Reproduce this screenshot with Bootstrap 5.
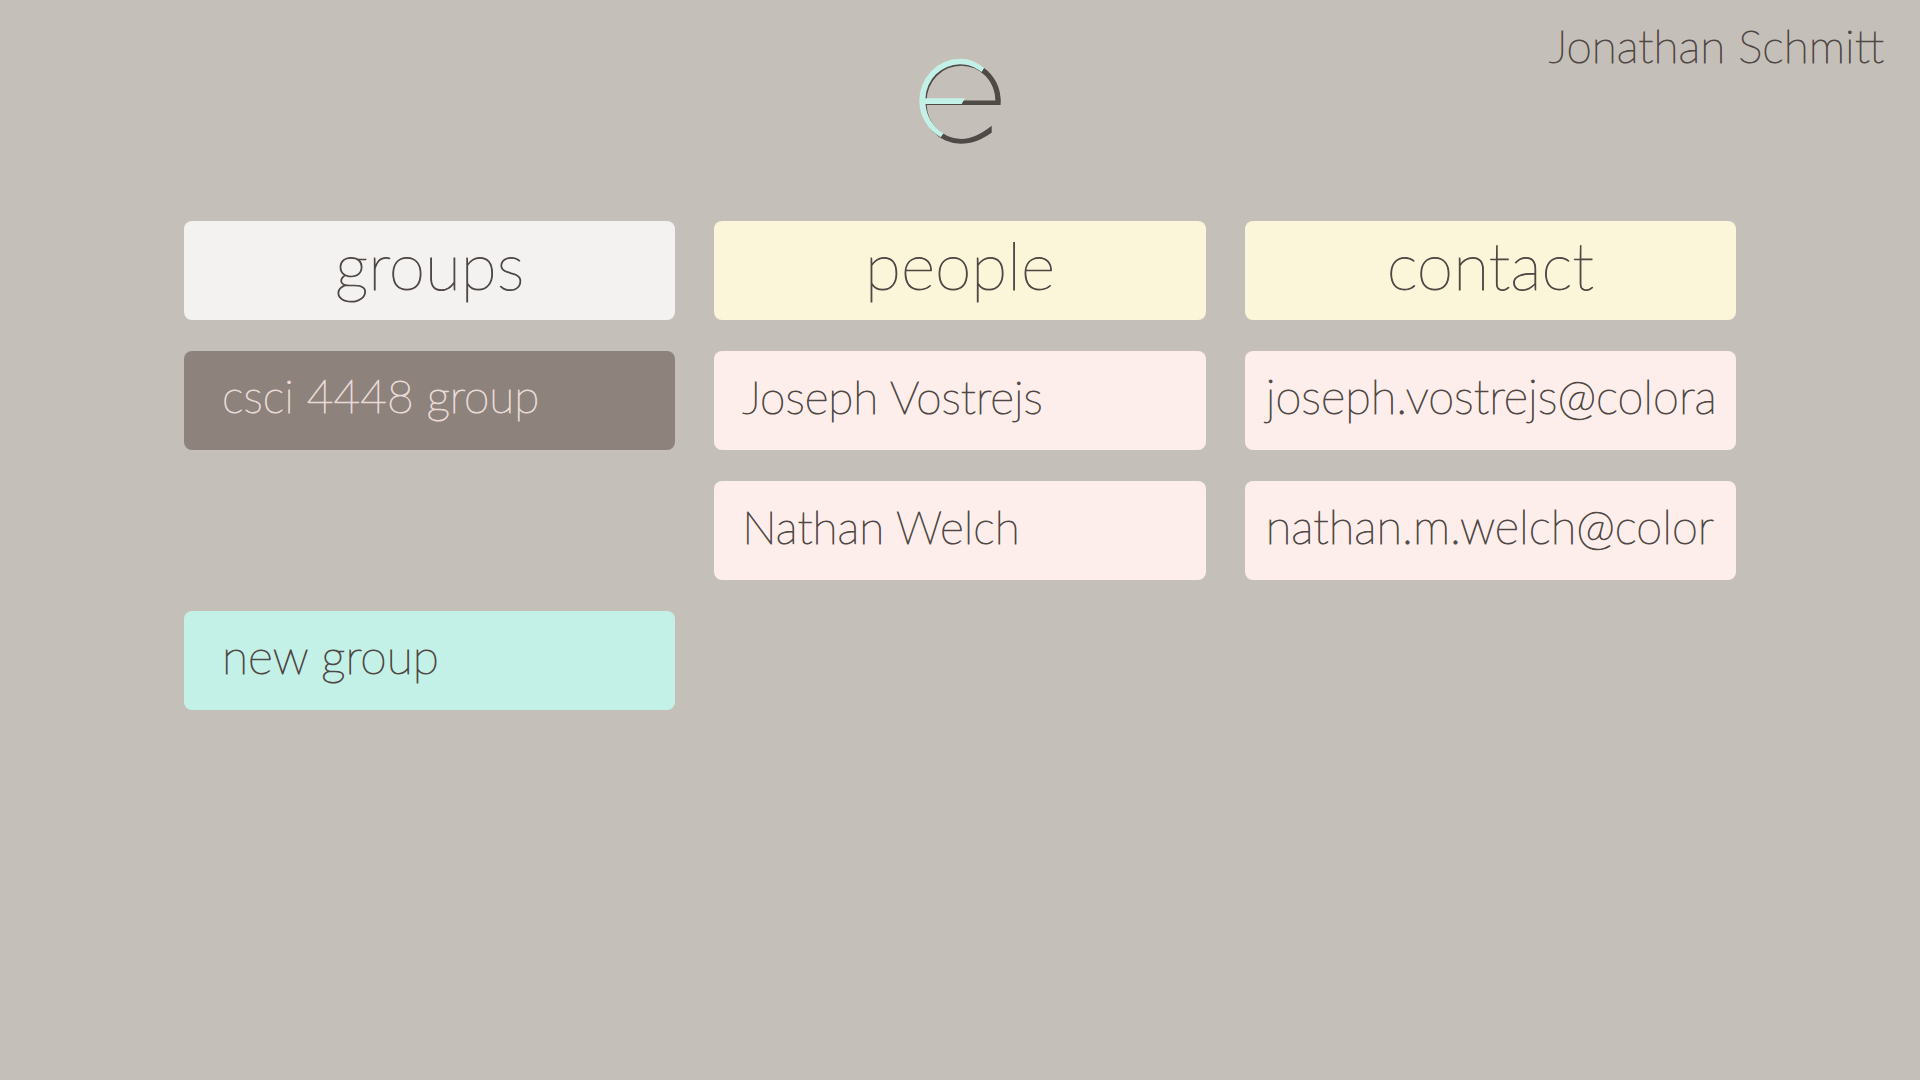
<!DOCTYPE html>
<html lang="en">
<head>
<meta charset="utf-8">
<meta name="viewport" content="width=device-width, initial-scale=1">
<title>Groups</title>
<link href="https://cdn.jsdelivr.net/npm/bootstrap@5.3.0/dist/css/bootstrap.min.css" rel="stylesheet">
<style>
  body { background: #c5bfb9; color: #4f4844; font-family: Lato, "Open Sans", sans-serif; font-weight: 100; }
  .topbar { height: 221px; padding: 16px 36px; }
  .brand-link { padding-top: 38px; }
  .account { color: inherit; font-size: 46px; line-height: 60px; text-decoration: none; }
  .account, .tile { -webkit-text-stroke: 1px currentColor; }
  .board { padding: 0 184px; gap: 39px; }
  .stack { flex: 1 1 0; min-width: 0; gap: 31px; }
  .tile { --bs-btn-border-width: 0px; height: 99px; border-radius: 8px; font-size: 46px; line-height: 60px; font-weight: 100; color: #4f4844; text-align: left; white-space: nowrap; padding: 16px 16px 23px 28px; }
  .tile:hover { color: #4f4844; }
  .tile-head { font-size: 66px; line-height: 70px; text-align: center; padding: 9px 16px 20px; background: #fbf5d9; }
  .tile-head.active-tab { background: #f3f2f0; }
  .tile-person { background: #fdeeeb; }
  .tile-mail { font-size: 47px; padding: 15px 16px 24px 21px; }
  .tile-group { background: #8d827c; color: #e9dad7; padding: 15px 16px 24px 38px; }
  .tile-new { font-size: 48px; background: #c4f1e7; padding: 15px 16px 24px 38px; }
  .tile-gap { height: 99px; }
</style>
<script src="https://cdn.jsdelivr.net/npm/bootstrap@5.3.0/dist/js/bootstrap.bundle.min.js" defer></script>
</head>
<body>
<header class="topbar row g-0 align-items-start">
  <div class="col"></div>
  <a class="col-auto brand-link" href="#" aria-label="Home">
    <svg class="d-block" width="90" height="96" viewBox="0 0 90 96">
      <path fill="#4f4a46" fill-rule="evenodd" d="M45 7 A40.500 41 0 0 1 85.600 48 V51 H11.700 A35 35 0 0 0 46 85 C57 85 67 79 76.700 71.700 V78.700 C66 86 57 89.700 46 89.700 A40 42 0 0 1 6 47 A39 40 0 0 1 45 7 Z M11.700 46.500 H80.700 A34.500 34.800 0 0 0 11.700 46.500 Z"/>
      <path fill="#4f4a46" d="M69 14 C79 21 86 33 85.600 48 H80.700 C80 35 76 25 66.700 18 Z"/>
      <path fill="#c4f1e7" d="M69 14 C62 8 54 4.800 45 4.800 A41 42 0 0 0 4.300 47 A41 42 0 0 0 25.700 83.300 L28.500 79.300 A36 37 0 0 1 10.500 50 H46.700 L50 44.300 H10.500 A35 35 0 0 1 45 10.300 C53 10.300 60 13 66.700 18 Z"/>
    </svg>
  </a>
  <div class="col text-end"><a class="account" href="#">Jonathan Schmitt</a></div>
</header>
<main class="board d-flex">
  <section class="stack d-flex flex-column">
    <button type="button" class="btn tile tile-head active-tab">groups</button>
    <button type="button" class="btn tile tile-group">csci 4448 group</button>
    <div class="tile-gap"></div>
    <button type="button" class="btn tile tile-new">new group</button>
  </section>
  <section class="stack d-flex flex-column">
    <button type="button" class="btn tile tile-head">people</button>
    <button type="button" class="btn tile tile-person">Joseph Vostrejs</button>
    <button type="button" class="btn tile tile-person">Nathan Welch</button>
  </section>
  <section class="stack d-flex flex-column">
    <button type="button" class="btn tile tile-head">contact</button>
    <a href="#" class="btn tile tile-person tile-mail">joseph.vostrejs@colora</a>
    <a href="#" class="btn tile tile-person tile-mail">nathan.m.welch@color</a>
  </section>
</main>
</body>
</html>
